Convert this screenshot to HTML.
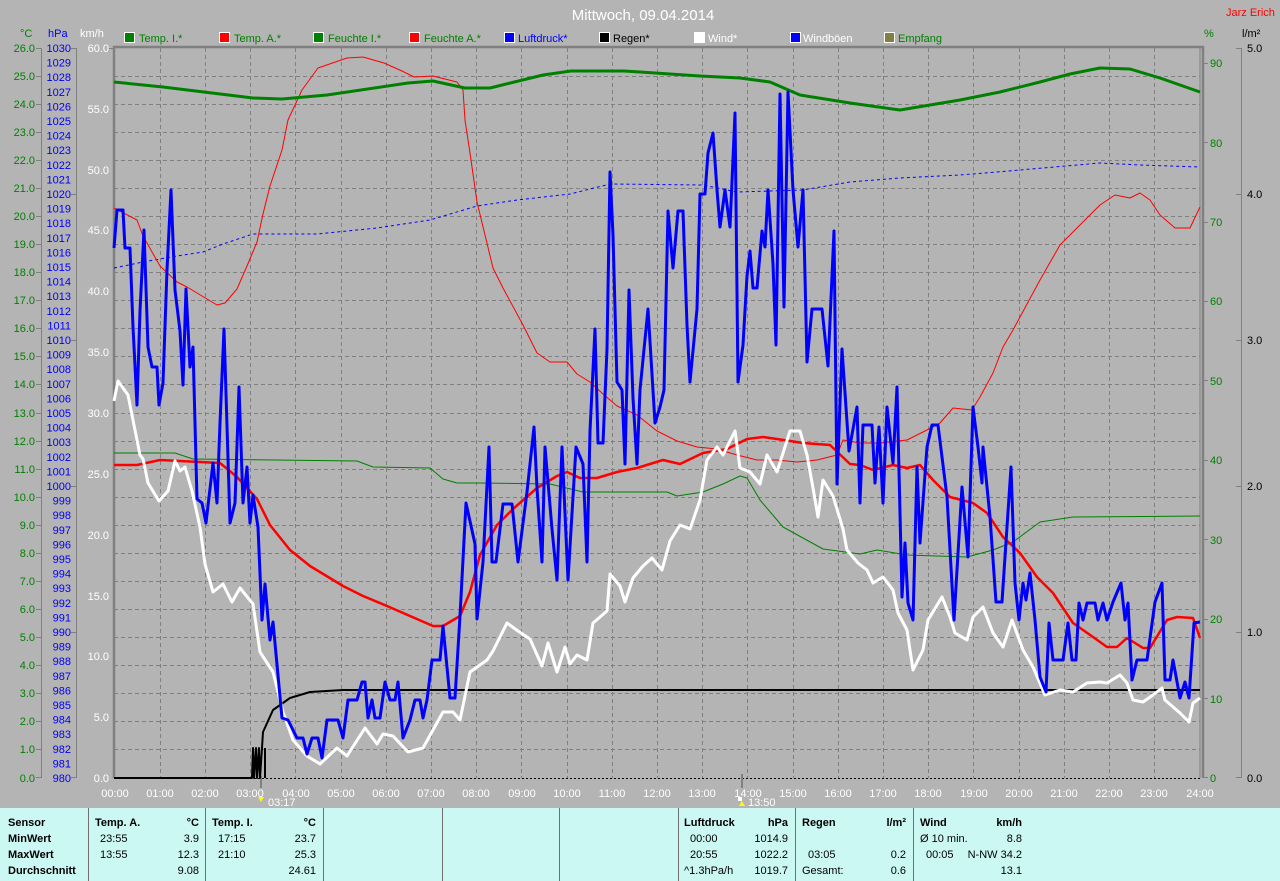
<!DOCTYPE html>
<html><head><meta charset="utf-8"><style>
html,body{margin:0;padding:0;background:#b4b4b4;}
body{width:1280px;height:881px;overflow:hidden;position:relative;font-family:"Liberation Sans",sans-serif;}
svg text{font-family:"Liberation Sans",sans-serif;font-size:11px;}
#panel{position:absolute;left:0;top:808px;width:1280px;height:73px;background:#ccf8f4;}
.sep{position:absolute;top:0;width:1px;height:73px;background:#707070;}
.t{position:absolute;font-size:11px;line-height:16px;color:#000;white-space:nowrap;}
.b{font-weight:bold;}
.r{text-align:right;}
</style></head><body>
<svg width="1280" height="808" style="position:absolute;left:0;top:0">
<text x="643" y="20" fill="#fff" text-anchor="middle" style="font-size:15px">Mittwoch, 09.04.2014</text>
<text x="1226" y="16" fill="#f00" style="font-size:11px">Jarz Erich</text>
<!-- legend -->
<g stroke="#fff" stroke-width="1">
<rect x="124.5" y="32.5" width="10" height="10" fill="#008000"/>
<rect x="219.5" y="32.5" width="10" height="10" fill="#f00"/>
<rect x="313.5" y="32.5" width="10" height="10" fill="#008000"/>
<rect x="409.5" y="32.5" width="10" height="10" fill="#f00"/>
<rect x="504.5" y="32.5" width="10" height="10" fill="#00f"/>
<rect x="599.5" y="32.5" width="10" height="10" fill="#000"/>
<rect x="694.5" y="32.5" width="10" height="10" fill="#fff"/>
<rect x="790.5" y="32.5" width="10" height="10" fill="#00f"/>
<rect x="884.5" y="32.5" width="10" height="10" fill="#808040"/>
</g>
<g>
<text x="139" y="42" fill="#008000">Temp. I.*</text>
<text x="234" y="42" fill="#008000">Temp. A.*</text>
<text x="328" y="42" fill="#008000">Feuchte I.*</text>
<text x="424" y="42" fill="#008000">Feuchte A.*</text>
<text x="518" y="42" fill="#0000ff">Luftdruck*</text>
<text x="613" y="42" fill="#000">Regen*</text>
<text x="708" y="42" fill="#fff">Wind*</text>
<text x="803" y="42" fill="#fff">Windböen</text>
<text x="898" y="42" fill="#008000">Empfang</text>
</g>
<!-- axis headers -->
<text x="20" y="37" fill="#008000">°C</text>
<text x="48" y="37" fill="#0000ff">hPa</text>
<text x="80" y="37" fill="#fff">km/h</text>
<text x="1204" y="37" fill="#008000">%</text>
<text x="1242" y="37" fill="#000">l/m²</text>
<!-- grid -->
<g stroke="#808080" stroke-width="1" stroke-dasharray="4,3" fill="none">
<path d="M114 76.5H1200M114 104.5H1200M114 132.5H1200M114 160.5H1200M114 188.5H1200M114 216.5H1200M114 244.5H1200M114 272.5H1200M114 300.5H1200M114 328.5H1200M114 356.5H1200M114 384.5H1200M114 413.5H1200M114 441.5H1200M114 469.5H1200M114 497.5H1200M114 525.5H1200M114 553.5H1200M114 581.5H1200M114 609.5H1200M114 637.5H1200M114 665.5H1200M114 693.5H1200M114 721.5H1200M114 749.5H1200"/>
<path d="M160.5 48V778M205.5 48V778M250.5 48V778M295.5 48V778M341.5 48V778M386.5 48V778M431.5 48V778M476.5 48V778M521.5 48V778M567.5 48V778M612.5 48V778M657.5 48V778M702.5 48V778M747.5 48V778M793.5 48V778M838.5 48V778M883.5 48V778M928.5 48V778M973.5 48V778M1019.5 48V778M1064.5 48V778M1109.5 48V778M1154.5 48V778"/>
</g>
<!-- frame -->
<path d="M114 778V47H1203V778" stroke="#808080" stroke-width="2.5" fill="none"/>
<path d="M1200 48V778" stroke="#808080" stroke-width="1"/>
<path d="M114 778.5H1201" stroke="#000" stroke-width="1" stroke-dasharray="2,2"/>
<!-- left axes -->
<g stroke="#808080" stroke-width="1"><path d="M41.5 48V778M76.5 48V778M1241.5 48V778"/></g>
<g stroke="#808080"><path d="M36 48.5h5M36 76.5h5M36 104.5h5M36 132.5h5M36 160.5h5M36 188.5h5M36 216.5h5M36 244.5h5M36 272.5h5M36 300.5h5M36 328.5h5M36 356.5h5M36 384.5h5M36 413.5h5M36 441.5h5M36 469.5h5M36 497.5h5M36 525.5h5M36 553.5h5M36 581.5h5M36 609.5h5M36 637.5h5M36 665.5h5M36 693.5h5M36 721.5h5M36 749.5h5M36 777.5h5M71 48.5h5M71 194.5h5M71 340.5h5M71 486.5h5M71 632.5h5M71 777.5h5M109 48.5h5M1203 63.5h5M1203 142.5h5M1203 222.5h5M1203 301.5h5M1203 380.5h5M1203 460.5h5M1203 539.5h5M1203 619.5h5M1203 698.5h5M1203 777.5h5M1236 48.5h5M1236 194.5h5M1236 340.5h5M1236 486.5h5M1236 632.5h5M1236 777.5h5"/></g>
<g fill="#008000" text-anchor="end">
<text x="35" y="52">26.0</text><text x="35" y="80">25.0</text><text x="35" y="108">24.0</text><text x="35" y="136">23.0</text><text x="35" y="164">22.0</text><text x="35" y="192">21.0</text><text x="35" y="220">20.0</text><text x="35" y="248">19.0</text><text x="35" y="276">18.0</text><text x="35" y="304">17.0</text><text x="35" y="332">16.0</text><text x="35" y="360">15.0</text><text x="35" y="388">14.0</text><text x="35" y="417">13.0</text><text x="35" y="445">12.0</text><text x="35" y="473">11.0</text><text x="35" y="501">10.0</text><text x="35" y="529">9.0</text><text x="35" y="557">8.0</text><text x="35" y="585">7.0</text><text x="35" y="613">6.0</text><text x="35" y="641">5.0</text><text x="35" y="669">4.0</text><text x="35" y="697">3.0</text><text x="35" y="725">2.0</text><text x="35" y="753">1.0</text><text x="35" y="782">0.0</text>
</g>
<g fill="#0000ff" text-anchor="end">
<text x="71" y="52">1030</text><text x="71" y="66.6">1029</text><text x="71" y="81.2">1028</text><text x="71" y="95.8">1027</text><text x="71" y="110.4">1026</text><text x="71" y="125">1025</text><text x="71" y="139.6">1024</text><text x="71" y="154.2">1023</text><text x="71" y="168.8">1022</text><text x="71" y="183.4">1021</text><text x="71" y="198">1020</text><text x="71" y="212.6">1019</text><text x="71" y="227.2">1018</text><text x="71" y="241.8">1017</text><text x="71" y="256.4">1016</text><text x="71" y="271">1015</text><text x="71" y="285.6">1014</text><text x="71" y="300.2">1013</text><text x="71" y="314.8">1012</text><text x="71" y="329.4">1011</text><text x="71" y="344">1010</text><text x="71" y="358.6">1009</text><text x="71" y="373.2">1008</text><text x="71" y="387.8">1007</text><text x="71" y="402.4">1006</text><text x="71" y="417">1005</text><text x="71" y="431.6">1004</text><text x="71" y="446.2">1003</text><text x="71" y="460.8">1002</text><text x="71" y="475.4">1001</text><text x="71" y="490">1000</text><text x="71" y="504.6">999</text><text x="71" y="519.2">998</text><text x="71" y="533.8">997</text><text x="71" y="548.4">996</text><text x="71" y="563">995</text><text x="71" y="577.6">994</text><text x="71" y="592.2">993</text><text x="71" y="606.8">992</text><text x="71" y="621.4">991</text><text x="71" y="636">990</text><text x="71" y="650.6">989</text><text x="71" y="665.2">988</text><text x="71" y="679.8">987</text><text x="71" y="694.4">986</text><text x="71" y="709">985</text><text x="71" y="723.6">984</text><text x="71" y="738.2">983</text><text x="71" y="752.8">982</text><text x="71" y="767.4">981</text><text x="71" y="782">980</text>
</g>
<g fill="#fff" text-anchor="end">
<text x="109" y="52">60.0</text><text x="109" y="113">55.0</text><text x="109" y="174">50.0</text><text x="109" y="234">45.0</text><text x="109" y="295">40.0</text><text x="109" y="356">35.0</text><text x="109" y="417">30.0</text><text x="109" y="478">25.0</text><text x="109" y="539">20.0</text><text x="109" y="600">15.0</text><text x="109" y="660">10.0</text><text x="109" y="721">5.0</text><text x="109" y="782">0.0</text>
</g>
<g fill="#008000">
<text x="1210" y="67">90</text><text x="1210" y="147">80</text><text x="1210" y="226">70</text><text x="1210" y="305">60</text><text x="1210" y="385">50</text><text x="1210" y="464">40</text><text x="1210" y="544">30</text><text x="1210" y="623">20</text><text x="1210" y="703">10</text><text x="1210" y="782">0</text>
</g>
<g fill="#000">
<text x="1247" y="52">5.0</text><text x="1247" y="198">4.0</text><text x="1247" y="344">3.0</text><text x="1247" y="490">2.0</text><text x="1247" y="636">1.0</text><text x="1247" y="782">0.0</text>
</g>
<!-- x labels -->
<g fill="#fff" text-anchor="middle">
<text x="115" y="797">00:00</text><text x="160" y="797">01:00</text><text x="205" y="797">02:00</text><text x="250" y="797">03:00</text><text x="296" y="797">04:00</text><text x="341" y="797">05:00</text><text x="386" y="797">06:00</text><text x="431" y="797">07:00</text><text x="476" y="797">08:00</text><text x="522" y="797">09:00</text><text x="567" y="797">10:00</text><text x="612" y="797">11:00</text><text x="657" y="797">12:00</text><text x="702" y="797">13:00</text><text x="748" y="797">14:00</text><text x="793" y="797">15:00</text><text x="838" y="797">16:00</text><text x="883" y="797">17:00</text><text x="928" y="797">18:00</text><text x="974" y="797">19:00</text><text x="1019" y="797">20:00</text><text x="1064" y="797">21:00</text><text x="1109" y="797">22:00</text><text x="1154" y="797">23:00</text><text x="1200" y="797">24:00</text>
</g>
<path d="M261 776V788M742 774V788" stroke="#808080" stroke-width="2"/>
<path d="M258 797l3 5 3-5z" fill="#ff0"/>
<path d="M739 806l3-5 3 5z" fill="#ff0"/>
<rect x="738" y="797" width="4" height="4" fill="#fff"/>
<text x="268" y="806" fill="#fff">03:17</text>
<text x="748" y="806" fill="#fff">13:50</text>
<!-- data -->
<g fill="none" stroke-linejoin="round">
<polyline stroke="#0000ff" stroke-width="1" stroke-dasharray="3,3" points="114,268 143,262 177,256 203,252 223,244 253,234 317,234 377,228 430,220 477,206 517,200 570,194 610,184 703,185 737,192 803,190 850,182 900,178 960,175 1020,170 1100,163 1140,165 1200,167"/>
<polyline stroke="#008000" stroke-width="1" points="114,453 175,453 193,459 357,461 373,467 430,468 443,479 457,483 480,483 550,484 583,492 667,492 677,496 703,492 723,484 740,476 747,478 760,500 783,527 823,549 860,554 877,550 907,555 967,557 993,550 1013,542 1040,522 1073,517 1200,516"/>
<polyline stroke="#ff0000" stroke-width="1" points="114,208 137,220 143,236 160,266 177,282 187,287 207,299 217,305 225,303 237,289 247,266 257,242 263,214 270,186 282,150 288,120 302,90 318,68 347,58 363,57 384,63 402,71 414,77 433,76 457,82 463,90 465,120 470,153 477,202 493,268 503,288 523,325 537,353 550,362 567,362 577,374 590,382 603,394 617,406 637,415 657,431 677,441 697,447 717,449 737,455 757,460 777,460 797,462 817,460 837,455 843,440 860,443 880,443 907,440 927,430 940,423 953,408 972,410 980,397 993,373 1003,347 1013,330 1040,280 1060,245 1080,225 1100,205 1115,195 1130,198 1140,193 1150,200 1160,215 1175,228 1190,228 1200,207"/>
<polyline stroke="#008000" stroke-width="3" points="114,82 163,87 212,93 253,98 282,99 327,95 408,83 433,81 465,88 490,88 543,75 571,71 624,71 640,72 700,76 740,78 770,82 800,95 850,103 900,110 960,100 1000,92 1040,82 1070,74 1100,68 1130,69 1160,78 1200,92"/>
<polyline stroke="#ff0000" stroke-width="2.5" points="114,465 137,465 160,460 220,463 237,477 257,499 270,525 290,550 310,566 343,586 363,596 387,606 410,616 433,626 443,626 460,616 470,592 480,555 497,525 513,509 537,488 557,476 567,472 580,478 597,478 617,472 637,468 663,460 680,464 703,453 727,449 747,439 763,437 777,439 803,443 830,445 850,464 860,465 873,470 893,465 907,468 920,465 933,480 950,497 973,503 987,513 1003,537 1020,553 1037,577 1053,593 1073,623 1093,637 1107,647 1117,647 1127,638 1143,648 1150,648 1167,620 1177,617 1193,618 1200,638"/>
<polyline stroke="#000" stroke-width="2" points="114,778 252,778 253,748 254,778 256,748 257,778 259,748 260,778 262,748 263,732 273,710 290,698 310,692 343,690 1200,690"/>
<path d="M265 748V778" stroke="#000" stroke-width="2"/>
<polyline stroke="#fff" stroke-width="3" points="114,401 118,381 128,395 140,455 143,459 148,483 159,501 168,491 175,461 180,471 185,467 192,491 200,527 205,564 213,592 223,584 232,602 240,588 253,604 260,652 273,672 283,712 293,740 307,756 320,764 337,748 347,756 365,728 377,744 383,734 393,736 408,752 423,748 433,730 443,712 453,712 460,720 470,672 487,660 493,651 507,623 518,631 530,639 542,666 548,643 557,672 565,647 570,664 577,655 587,660 593,623 607,611 610,574 620,586 625,602 633,578 643,566 652,558 662,570 670,541 680,525 690,529 700,500 707,460 717,447 723,455 735,431 740,468 750,472 760,484 767,455 777,472 790,431 800,431 807,455 813,488 818,517 823,480 833,496 843,529 847,550 858,563 867,570 873,583 883,577 893,590 898,613 907,630 913,670 923,650 928,620 942,597 950,617 955,633 967,640 973,617 983,607 993,633 1003,647 1012,620 1023,650 1033,667 1045,695 1060,690 1073,692 1087,683 1100,682 1107,683 1120,675 1127,683 1133,700 1143,702 1153,695 1162,688 1165,700 1180,713 1189,722 1193,703 1200,698"/>
<polyline stroke="#0000ff" stroke-width="3" points="114,248 117,210 123,210 125,248 130,248 133,327 137,405 140,311 144,230 148,347 152,367 157,367 159,405 163,383 167,270 171,190 175,290 180,331 183,385 186,289 190,367 193,347 197,499 202,503 206,523 213,463 217,503 220,423 224,329 230,523 235,503 239,387 243,503 247,467 250,523 253,495 258,527 262,620 265,584 270,640 273,622 282,718 288,720 297,738 303,738 307,754 312,738 318,738 322,758 327,720 338,720 343,738 348,700 357,700 362,682 365,682 368,718 372,700 375,718 380,718 385,682 390,700 395,700 398,682 403,738 410,720 415,700 420,700 423,718 427,700 432,660 440,660 443,626 450,698 455,698 460,616 466,503 475,544 477,619 483,562 489,447 492,562 496,562 503,504 512,504 518,562 527,492 534,427 537,488 542,562 545,447 552,529 557,580 562,447 568,580 576,447 583,464 587,562 590,431 595,329 598,443 603,443 607,349 610,172 613,235 617,382 622,390 625,464 629,290 633,398 637,464 640,390 648,309 655,423 660,407 664,390 668,211 673,268 678,211 683,211 687,325 690,382 697,309 700,194 705,194 708,153 713,133 717,190 720,227 725,190 730,227 735,113 738,382 743,345 747,276 750,251 753,288 757,288 762,231 765,247 768,190 773,264 776,345 780,94 784,307 788,92 793,190 798,247 803,190 807,362 812,309 822,309 828,366 834,231 837,484 842,349 849,451 857,407 860,503 863,425 872,425 875,483 879,427 883,503 887,407 893,463 897,387 902,597 905,543 908,603 913,620 917,467 920,543 927,447 932,425 938,425 947,497 954,620 962,487 968,557 973,407 978,447 982,483 983,447 990,517 996,602 1002,602 1011,467 1015,583 1019,620 1023,583 1026,600 1030,573 1035,620 1040,677 1046,692 1049,623 1053,660 1063,660 1068,623 1072,660 1076,660 1079,603 1083,620 1087,603 1095,603 1098,620 1103,603 1107,620 1113,602 1121,583 1125,620 1128,603 1132,680 1137,660 1147,660 1155,602 1162,583 1165,680 1170,680 1173,660 1180,698 1185,682 1189,698 1194,623 1200,622"/>
</g>
</svg>
<div id="panel">
<div class="sep" style="left:88px"></div><div class="sep" style="left:205px"></div><div class="sep" style="left:323px"></div><div class="sep" style="left:442px"></div><div class="sep" style="left:559px"></div><div class="sep" style="left:678px"></div><div class="sep" style="left:795px"></div><div class="sep" style="left:913px"></div>
<div class="t b" style="left:8px;top:7px">Sensor</div>
<div class="t b" style="left:8px;top:23px">MinWert</div>
<div class="t b" style="left:8px;top:39px">MaxWert</div>
<div class="t b" style="left:8px;top:55px">Durchschnitt</div>
<div class="t b" style="left:95px;top:7px">Temp. A.</div><div class="t b r" style="right:1081px;top:7px">°C</div>
<div class="t" style="left:100px;top:23px">23:55</div><div class="t r" style="right:1081px;top:23px">3.9</div>
<div class="t" style="left:100px;top:39px">13:55</div><div class="t r" style="right:1081px;top:39px">12.3</div>
<div class="t r" style="right:1081px;top:55px">9.08</div>
<div class="t b" style="left:212px;top:7px">Temp. I.</div><div class="t b r" style="right:964px;top:7px">°C</div>
<div class="t" style="left:218px;top:23px">17:15</div><div class="t r" style="right:964px;top:23px">23.7</div>
<div class="t" style="left:218px;top:39px">21:10</div><div class="t r" style="right:964px;top:39px">25.3</div>
<div class="t r" style="right:964px;top:55px">24.61</div>
<div class="t b" style="left:684px;top:7px">Luftdruck</div><div class="t b r" style="right:492px;top:7px">hPa</div>
<div class="t" style="left:690px;top:23px">00:00</div><div class="t r" style="right:492px;top:23px">1014.9</div>
<div class="t" style="left:690px;top:39px">20:55</div><div class="t r" style="right:492px;top:39px">1022.2</div>
<div class="t" style="left:684px;top:55px">^1.3hPa/h</div><div class="t r" style="right:492px;top:55px">1019.7</div>
<div class="t b" style="left:802px;top:7px">Regen</div><div class="t b r" style="right:374px;top:7px">l/m²</div>
<div class="t" style="left:808px;top:39px">03:05</div><div class="t r" style="right:374px;top:39px">0.2</div>
<div class="t" style="left:802px;top:55px">Gesamt:</div><div class="t r" style="right:374px;top:55px">0.6</div>
<div class="t b" style="left:920px;top:7px">Wind</div><div class="t b r" style="right:258px;top:7px">km/h</div>
<div class="t" style="left:920px;top:23px">Ø 10 min.</div><div class="t r" style="right:258px;top:23px">8.8</div>
<div class="t" style="left:926px;top:39px">00:05</div><div class="t r" style="right:258px;top:39px">N-NW 34.2</div>
<div class="t r" style="right:258px;top:55px">13.1</div>
</div>
</body></html>
